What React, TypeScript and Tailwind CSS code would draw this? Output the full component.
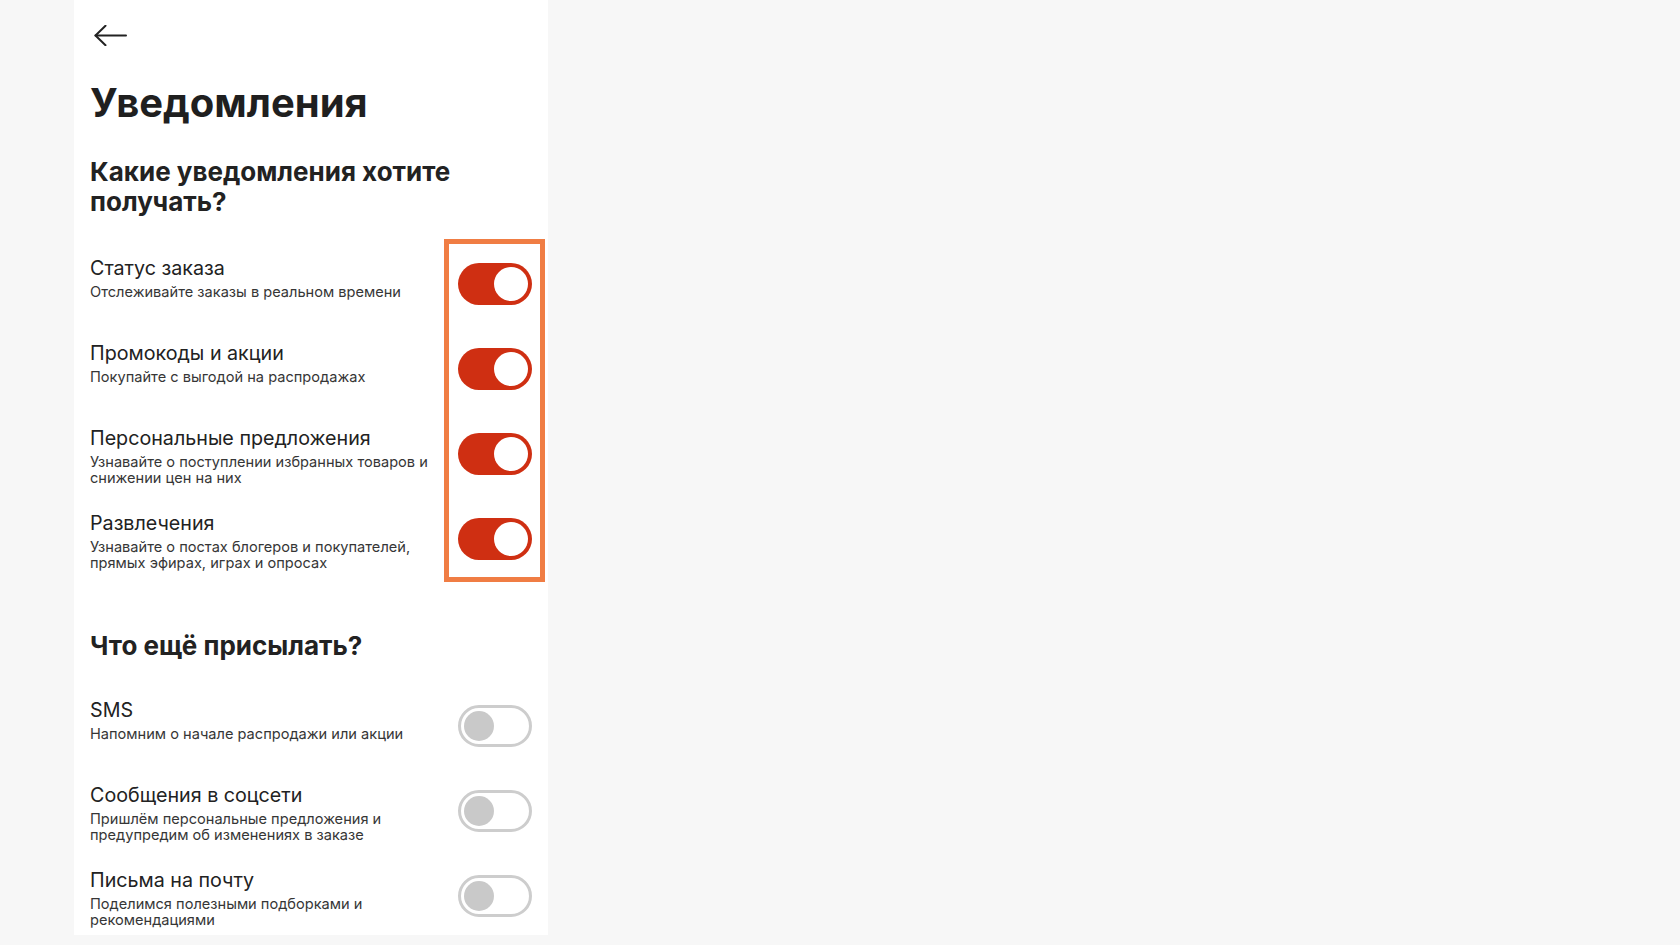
import React from "react";

type Item = { title: string; desc: string[]; on: boolean };

const group1: Item[] = [
  { title: "Статус заказа", desc: ["Отслеживайте заказы в реальном времени"], on: true },
  { title: "Промокоды и акции", desc: ["Покупайте с выгодой на распродажах"], on: true },
  {
    title: "Персональные предложения",
    desc: ["Узнавайте о поступлении избранных товаров и", "снижении цен на них"],
    on: true,
  },
  {
    title: "Развлечения",
    desc: ["Узнавайте о постах блогеров и покупателей,", "прямых эфирах, играх и опросах"],
    on: true,
  },
];

const group2: Item[] = [
  { title: "SMS", desc: ["Напомним о начале распродажи или акции"], on: false },
  {
    title: "Сообщения в соцсети",
    desc: ["Пришлём персональные предложения и", "предупредим об изменениях в заказе"],
    on: false,
  },
  {
    title: "Письма на почту",
    desc: ["Поделимся полезными подборками и", "рекомендациями"],
    on: false,
  },
];

function Toggle({ on }: { on: boolean }) {
  if (on) {
    return (
      <div className="relative h-[42px] w-[74px] shrink-0 rounded-full bg-[#cf2f12]">
        <div className="absolute right-[4px] top-[4px] h-[34px] w-[34px] rounded-full bg-white" />
      </div>
    );
  }
  return (
    <div className="relative h-[42px] w-[74px] shrink-0 rounded-full border-[3px] border-[#cdcdcd] bg-white">
      <div className="absolute left-[3px] top-[3px] h-[30px] w-[30px] rounded-full bg-[#c9c9c9]" />
    </div>
  );
}

function Row({ item }: { item: Item }) {
  return (
    <div className="flex h-[85px] items-start justify-between gap-4">
      <div className="flex flex-col">
        <div className="text-[19.7px] leading-[24px] text-[#222222]">{item.title}</div>
        <div className="mt-[4px] text-[14.6px] leading-[16px] text-[#363636]">
          {item.desc.map((d, i) => (
            <div key={i} className="whitespace-nowrap">
              {d}
            </div>
          ))}
        </div>
      </div>
      <div className="mt-[7px]">
        <Toggle on={item.on} />
      </div>
    </div>
  );
}

export default function App() {
  return (
    <div
      className="h-[945px] w-full bg-[#f7f7f7]"
      style={{ fontFamily: "Inter, 'Liberation Sans', Arial, sans-serif" }}
    >
      <div className="relative ml-[74px] h-[935px] w-[474px] overflow-hidden bg-white px-4 pt-[25px]">
        <svg
          width="33"
          height="21"
          viewBox="0 0 33 21"
          fill="none"
          stroke="#222222"
          strokeWidth="2"
          strokeLinecap="round"
          strokeLinejoin="round"
          className="ml-[4px] block h-[21px] w-[33px]"
        >
          <path d="M32 10.5H1.5" />
          <path d="M11.5 0.8L1.5 10.5L11.5 20.2" />
        </svg>
        <h1 className="mt-[34px] text-[40px] font-bold leading-[46px] text-[#1f1f1f]">
          Уведомления
        </h1>
        <h2 className="mt-[31px] text-[26px] font-bold leading-[30px] text-[#222222]">
          Какие уведомления хотите
          <br />
          получать?
        </h2>
        <div className="mt-[39px]">
          {group1.map((it) => (
            <Row key={it.title} item={it} />
          ))}
        </div>
        <h2 className="mt-[35px] text-[26px] font-bold leading-[30px] text-[#222222]">
          Что ещё присылать?
        </h2>
        <div className="mt-[37px]">
          {group2.map((it) => (
            <Row key={it.title} item={it} />
          ))}
        </div>
        <div className="pointer-events-none absolute left-[370px] top-[239px] h-[343px] w-[101px] border-[5px] border-[#f07d44]" />
      </div>
    </div>
  );
}
